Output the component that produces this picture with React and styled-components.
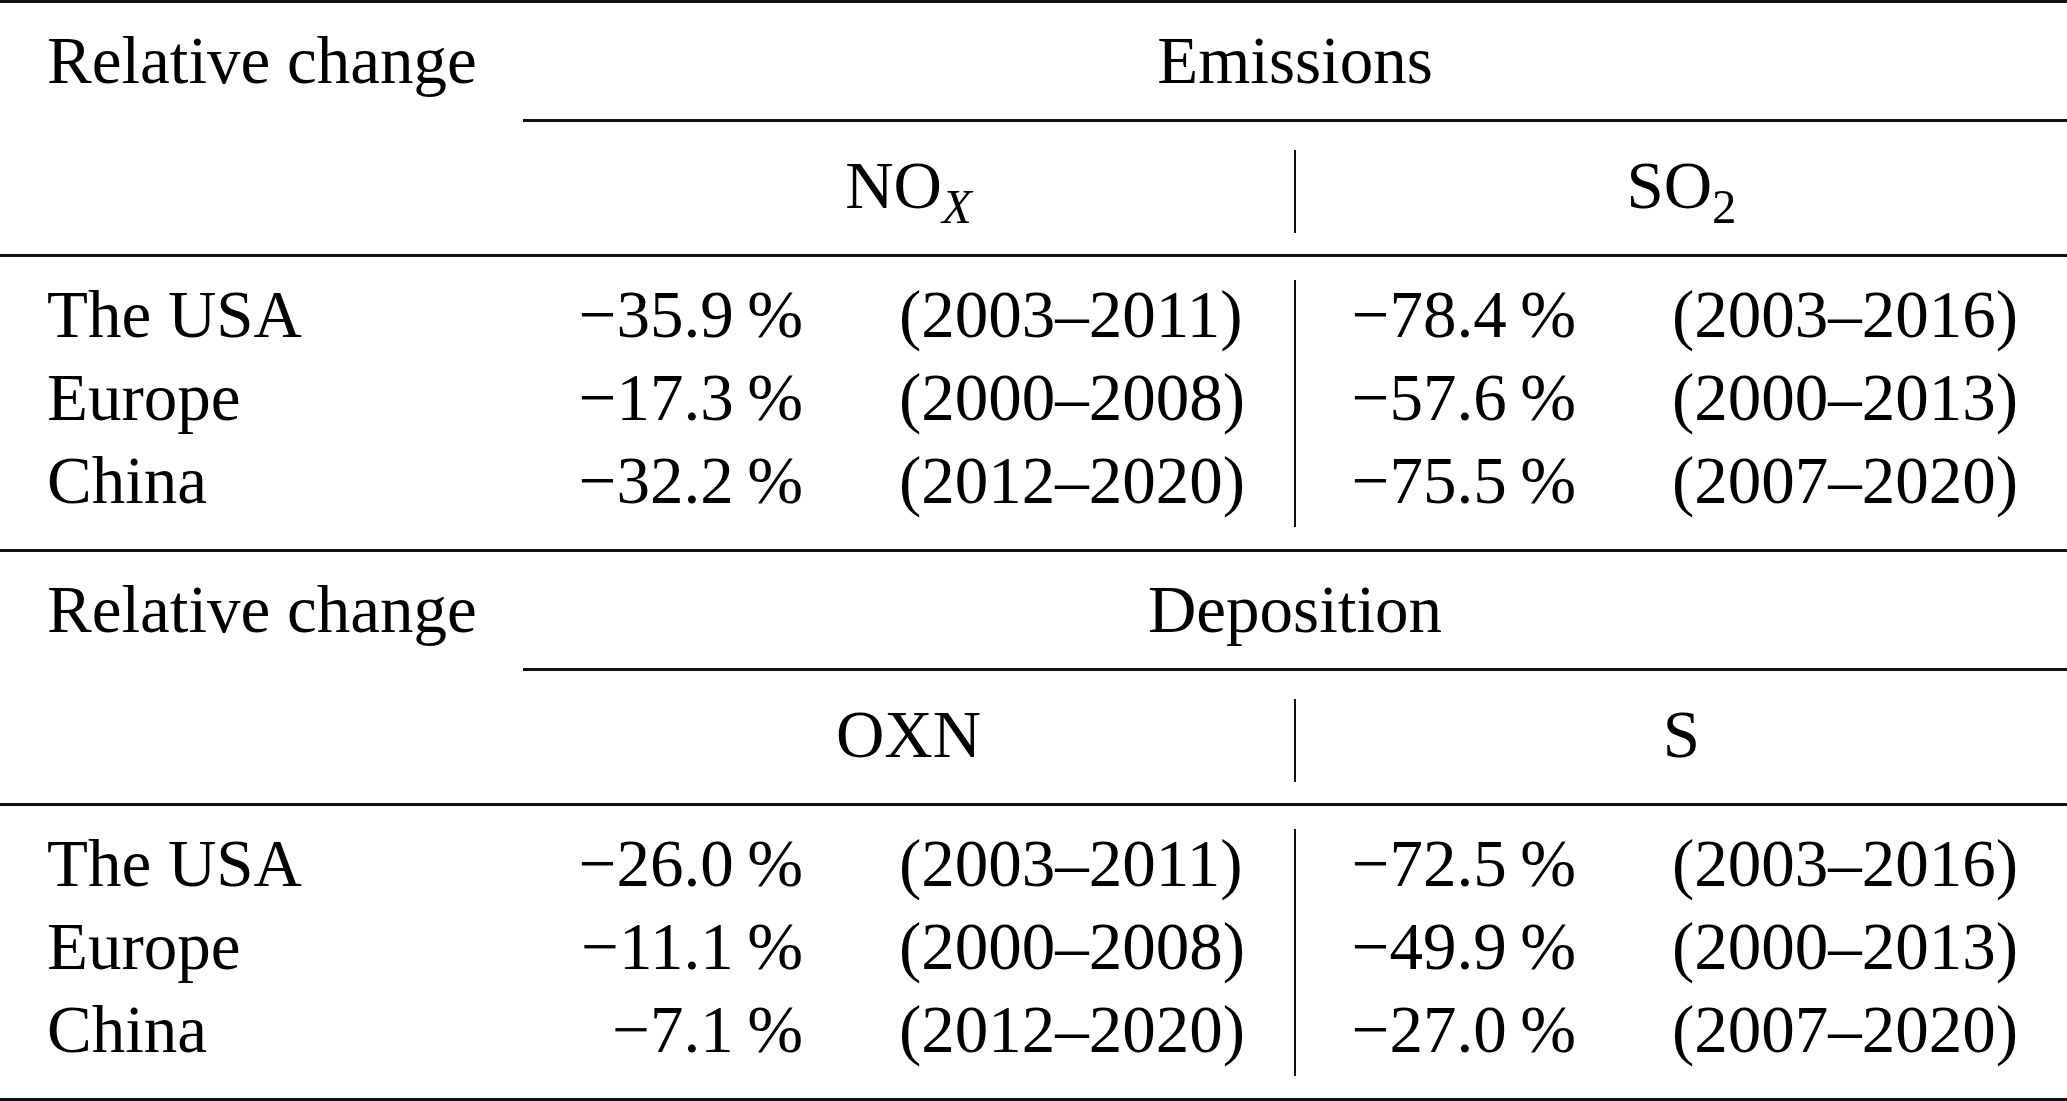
import React from 'react';
import styled, { createGlobalStyle } from 'styled-components';

const GlobalStyle = createGlobalStyle`
    html, body {
        margin: 0;
        padding: 0;
        background: #fff;
    }
    body {
        font-family: "Liberation Serif", "Times New Roman", serif;
        color: #000;
    }
`;

const Table = styled.div`
    width: 2067px;
    font-size: 67px;
`;

const Section = styled.section`
    display: grid;
    grid-template-columns: 523px 771px 2px 771px;
    grid-template-rows: 116px 3px 132px 3px 292px;
    border-top: 3px solid #111;
    border-bottom: ${(p) => (p.$last ? '3px solid #111' : 'none')};
`;

const Label = styled.div`
    grid-column: 1;
    grid-row: 1;
    padding: 20px 0 0 47px;
    line-height: 74px;
    white-space: nowrap;
`;

const Title = styled.div`
    grid-column: 2 / 5;
    grid-row: 1;
    padding-top: 20px;
    line-height: 74px;
    text-align: center;
`;

const Rule = styled.div`
    grid-column: ${(p) => p.$cols};
    grid-row: ${(p) => p.$row};
    background: #111;
`;

const Head = styled.div`
    grid-column: ${(p) => p.$col};
    grid-row: 3;
    padding-top: 26px;
    line-height: 74px;
    text-align: center;
`;

const Sub = styled.sub`
    font-size: 0.73em;
    line-height: 1;
    vertical-align: -15px;
    font-style: ${(p) => (p.$italic ? 'italic' : 'normal')};
`;

const Divider = styled.div`
    grid-column: 3;
    grid-row: ${(p) => p.$row};
    margin: ${(p) => p.$margin};
    background: #111;
`;

const Names = styled.div`
    grid-column: 1;
    grid-row: 5;
    padding: 16px 0 0 47px;
    line-height: 83px;
`;

const Group = styled.div`
    grid-column: ${(p) => p.$col};
    grid-row: 5;
    padding-top: 16px;
    line-height: 83px;
`;

const Line = styled.div`
    display: flex;
    white-space: nowrap;
`;

const Value = styled.span`
    width: 280px;
    text-align: right;
`;

const Period = styled.span`
    margin-left: 96px;
`;

const regions = ['The USA', 'Europe', 'China'];

const sections = [
    {
        title: 'Emissions',
        heads: [
            <>NO<Sub $italic>X</Sub></>,
            <>SO<Sub>2</Sub></>,
        ],
        groups: [
            [
                ['\u221235.9\u2009%', '(2003\u20132011)'],
                ['\u221217.3\u2009%', '(2000\u20132008)'],
                ['\u221232.2\u2009%', '(2012\u20132020)'],
            ],
            [
                ['\u221278.4\u2009%', '(2003\u20132016)'],
                ['\u221257.6\u2009%', '(2000\u20132013)'],
                ['\u221275.5\u2009%', '(2007\u20132020)'],
            ],
        ],
    },
    {
        title: 'Deposition',
        heads: [<>OXN</>, <>S</>],
        groups: [
            [
                ['\u221226.0\u2009%', '(2003\u20132011)'],
                ['\u221211.1\u2009%', '(2000\u20132008)'],
                ['\u22127.1\u2009%', '(2012\u20132020)'],
            ],
            [
                ['\u221272.5\u2009%', '(2003\u20132016)'],
                ['\u221249.9\u2009%', '(2000\u20132013)'],
                ['\u221227.0\u2009%', '(2007\u20132020)'],
            ],
        ],
    },
];

const App = () => {
    return (
        <Table>
            <GlobalStyle />
            {sections.map((s, i) => (
                <Section key={s.title} $last={i === sections.length - 1}>
                    <Label>Relative change</Label>
                    <Title>{s.title}</Title>
                    <Rule $cols="2 / 5" $row={2} />
                    <Head $col={2}>{s.heads[0]}</Head>
                    <Divider $row={3} $margin="28px 0 21px" />
                    <Head $col={4}>{s.heads[1]}</Head>
                    <Rule $cols="1 / 5" $row={4} />
                    <Names>
                        {regions.map((r) => (
                            <Line key={r}>{r}</Line>
                        ))}
                    </Names>
                    {s.groups.map((g, j) => (
                        <Group key={j} $col={j === 0 ? 2 : 4}>
                            {g.map(([v, p]) => (
                                <Line key={p + v}>
                                    <Value>{v}</Value>
                                    <Period>{p}</Period>
                                </Line>
                            ))}
                        </Group>
                    ))}
                    <Divider $row={5} $margin="23px 0 22px" />
                </Section>
            ))}
        </Table>
    );
};

export default App;
